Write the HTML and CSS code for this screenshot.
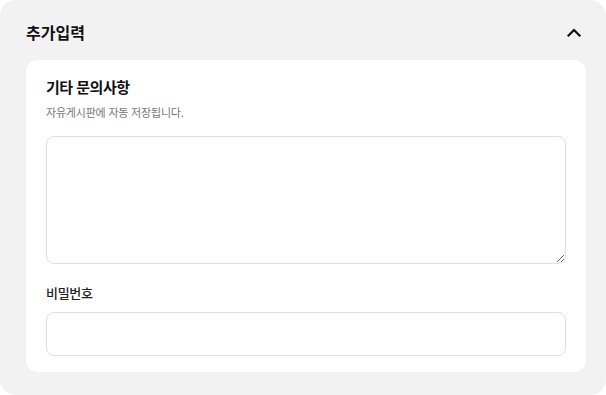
FILE: index.html
```html
<!DOCTYPE html>
<html lang="ko">
<head>
    <meta charset="UTF-8">
    <meta name="viewport" content="width=device-width, initial-scale=1.0">
    <title>추가입력</title>
    <link rel="stylesheet" href="styles.css">
</head>
<body>

    <section class="panel">
        <div class="panel-header">
            <h2 class="panel-title">추가입력</h2>
            <button type="button" class="toggle" aria-label="접기">
                <svg width="24" height="24" viewBox="0 0 24 24">
                    <path d="M6.5 15.5 L12 10 L17.5 15.5" stroke="#111" stroke-width="2.2" fill="none" stroke-linecap="square" stroke-linejoin="miter"/>
                </svg>
            </button>
        </div>

        <form class="card">
            <h3 class="card-title">기타 문의사항</h3>
            <p class="card-desc">자유게시판에 자동 저장됩니다.</p>
            <textarea class="field-area" name="memo"></textarea>

            <label class="field-label" for="password">비밀번호</label>
            <input class="field-input" type="password" id="password" name="password">
        </form>
    </section>

</body>
</html>
```

FILE: styles.css
```css
body {
    margin: 0;
    background: #fff;
    font-family: "Noto Sans CJK KR", "Noto Sans", sans-serif;
    color: #111;
}

.panel {
    background: #f2f2f2;
    border-radius: 16px;
    height: 395px;
    box-sizing: border-box;
    padding: 0 20px 0 26px;
}

.panel-header {
    display: flex;
    align-items: center;
    justify-content: space-between;
    padding-top: 20px;
    margin-bottom: 16px;
}

.panel-title {
    margin: 0;
    font-size: 16px;
    line-height: 24px;
    font-weight: 700;
    letter-spacing: 0;
}

.toggle {
    border: none;
    background: none;
    padding: 0;
    width: 24px;
    height: 24px;
    cursor: pointer;
}

.toggle svg {
    display: block;
}

.card {
    background: #fff;
    border-radius: 12px;
    padding: 18px 20px 16px;
}

.card-title {
    margin: 0;
    font-size: 15px;
    line-height: 18px;
    font-weight: 700;
    letter-spacing: -0.5px;
}

.card-desc {
    margin: 8px 0 0;
    font-size: 11px;
    line-height: 16px;
    color: #777;
    letter-spacing: -0.2px;
}

.field-area,
.field-input {
    display: block;
    width: 100%;
    box-sizing: border-box;
    border: 1px solid #e0e0e0;
    border-radius: 8px;
    background: #fff;
    font-family: inherit;
    font-size: 13px;
    outline: none;
}

.field-area {
    margin-top: 16px;
    height: 128px;
    padding: 10px 12px;
}

.field-label {
    display: block;
    margin-top: 19px;
    font-size: 13px;
    line-height: 20px;
    font-weight: 500;
    color: #222;
    letter-spacing: -0.3px;
}

.field-input {
    margin-top: 9px;
    height: 44px;
    padding: 0 12px;
}
```
